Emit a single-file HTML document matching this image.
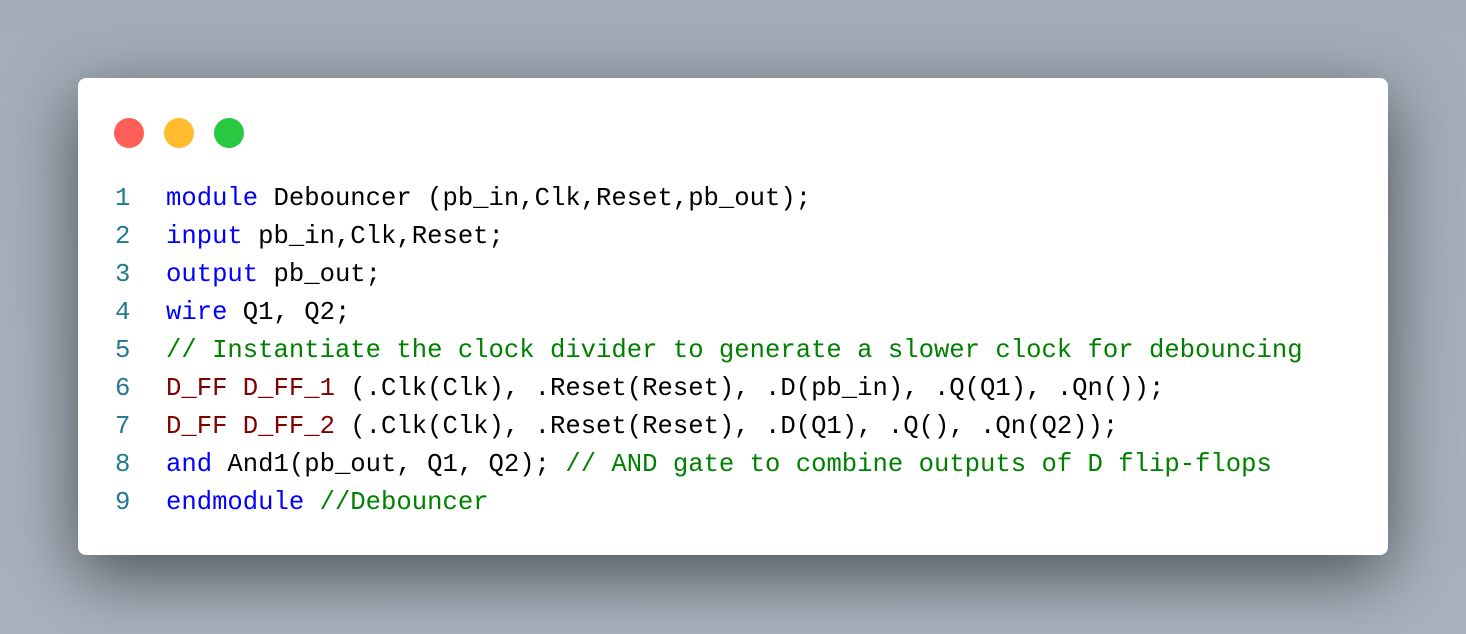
<!DOCTYPE html>
<html><head><style>
html,body{margin:0;padding:0}
body{width:1466px;height:634px;overflow:hidden;background:linear-gradient(180deg,#a3adb8 0%,#a8b2bd 100%);position:relative}
.card{position:absolute;left:78px;top:78px;width:1310px;height:477px;background:#fff;border-radius:8px;box-shadow:0 20px 68px rgba(0,0,0,0.55)}
.dot{position:absolute;top:40px;width:30px;height:30px;border-radius:50%}
.code{position:absolute;left:0;top:102px;font-family:"Liberation Mono",monospace;font-size:25.6px;line-height:38px;white-space:pre;color:#000}
.ln{display:inline-block;width:88px;text-align:left;padding-left:37px;box-sizing:border-box;color:#237893}
.k{color:#0000ff}.c{color:#008000}.t{color:#800000}
</style></head><body>
<div class="card">
<div class="dot" style="left:36px;background:#ff5f57"></div>
<div class="dot" style="left:86px;background:#febc2e"></div>
<div class="dot" style="left:136px;background:#28c840"></div>
<div class="code"><div><span class="ln">1</span><span class="k">module</span> Debouncer (pb_in,Clk,Reset,pb_out);</div><div><span class="ln">2</span><span class="k">input</span> pb_in,Clk,Reset;</div><div><span class="ln">3</span><span class="k">output</span> pb_out;</div><div><span class="ln">4</span><span class="k">wire</span> Q1, Q2;</div><div><span class="ln">5</span><span class="c">// Instantiate the clock divider to generate a slower clock for debouncing</span></div><div><span class="ln">6</span><span class="t">D_FF D_FF_1</span> (.Clk(Clk), .Reset(Reset), .D(pb_in), .Q(Q1), .Qn());</div><div><span class="ln">7</span><span class="t">D_FF D_FF_2</span> (.Clk(Clk), .Reset(Reset), .D(Q1), .Q(), .Qn(Q2));</div><div><span class="ln">8</span><span class="k">and</span> And1(pb_out, Q1, Q2); <span class="c">// AND gate to combine outputs of D flip-flops</span></div><div><span class="ln">9</span><span class="k">endmodule</span> <span class="c">//Debouncer</span></div></div>
</div>
</body></html>
